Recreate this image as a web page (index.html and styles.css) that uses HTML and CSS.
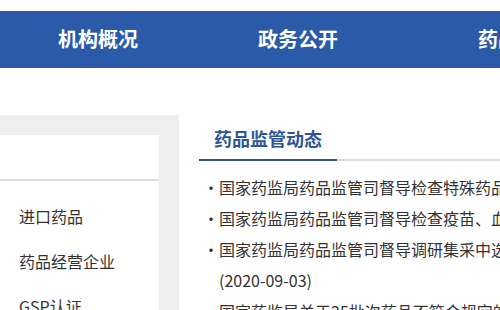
FILE: index.html
```html
<!DOCTYPE html>
<html lang="zh-CN">
<head>
<meta charset="utf-8">
<title>药品监管</title>
<link rel="stylesheet" href="styles.css">
</head>
<body>
<div class="page">
  <nav class="nav">
    <a class="nav-item">机构概况</a>
    <a class="nav-item">政务公开</a>
    <a class="nav-item nav-item-wide">药品监管</a>
  </nav>
  <div class="main">
    <aside class="side">
      <div class="side-box">
        <div class="side-head"></div>
        <ul class="side-list">
          <li>进口药品</li>
          <li>药品经营企业</li>
          <li>GSP认证</li>
          <li>药品生产企业</li>
        </ul>
      </div>
    </aside>
    <section class="news">
      <div class="news-head"><h2 class="news-title">药品监管动态</h2></div>
      <ul class="news-list">
        <li>国家药监局药品监管司督导检查特殊药品安全管理工作 <span class="date">(2020-09-07)</span></li>
        <li>国家药监局药品监管司督导检查疫苗、血液制品生产 <span class="date">(2020-09-04)</span></li>
        <li>国家药监局药品监管司督导调研集采中选药品生产企业质量管理 <span class="date">(2020-09-03)</span></li>
        <li>国家药监局关于25批次药品不符合规定的通告 <span class="date">(2020-09-02)</span></li>
      </ul>
    </section>
  </div>
</div>
</body>
</html>
```
FILE: styles.css
```css
html, body {
  margin: 0;
  padding: 0;
  background: #ffffff;
  overflow: hidden;
}
body {
  font-family: "Noto Sans CJK SC", "Noto Sans", sans-serif;
  color: #333333;
}
.page {
  width: 900px;
  padding-top: 11px;
}
.nav {
  display: flex;
  height: 57px;
  align-items: center;
  background: #2b5aa8;
  padding-left: 58px;
  gap: 120px;
}
.nav-item {
  color: #ffffff;
  font-size: 20px;
  font-weight: bold;
  line-height: 24px;
  width: 80px;
  white-space: nowrap;
  padding-bottom: 2px;
}
.nav-item-wide {
  margin-left: 20px;
}
.main {
  display: flex;
  gap: 20px;
  margin-top: 47px;
}
.side {
  width: 159px;
  padding: 20px 20px 40px 0;
  background: #eeeeee;
}
.side-box {
  background: #ffffff;
  height: 300px;
}
.side-head {
  height: 44px;
  border-bottom: 2px solid #dddddd;
}
.side-list {
  list-style: none;
  margin: 0;
  padding: 13px 0 0 19px;
}
.side-list li {
  font-size: 16px;
  line-height: 45px;
  color: #333333;
}
.news {
  width: 540px;
}
.news-head {
  border-bottom: 2px solid #dddddd;
  height: 44px;
}
.news-title {
  display: inline-block;
  margin: 0;
  width: 123px;
  padding: 12px 0 10px 15px;
  font-size: 18px;
  line-height: 22px;
  font-weight: bold;
  color: #2f5596;
  border-bottom: 2px solid #34527a;
}
.news-list {
  list-style: none;
  margin: 11px 0 0;
  padding: 0 0 0 20px;
}
.news-list li {
  font-size: 16px;
  line-height: 31px;
  color: #333333;
}
.news-list li::before {
  content: "·";
  display: inline-block;
  width: 16px;
  margin-left: -16px;
}
.date {
  white-space: nowrap;
}
```
